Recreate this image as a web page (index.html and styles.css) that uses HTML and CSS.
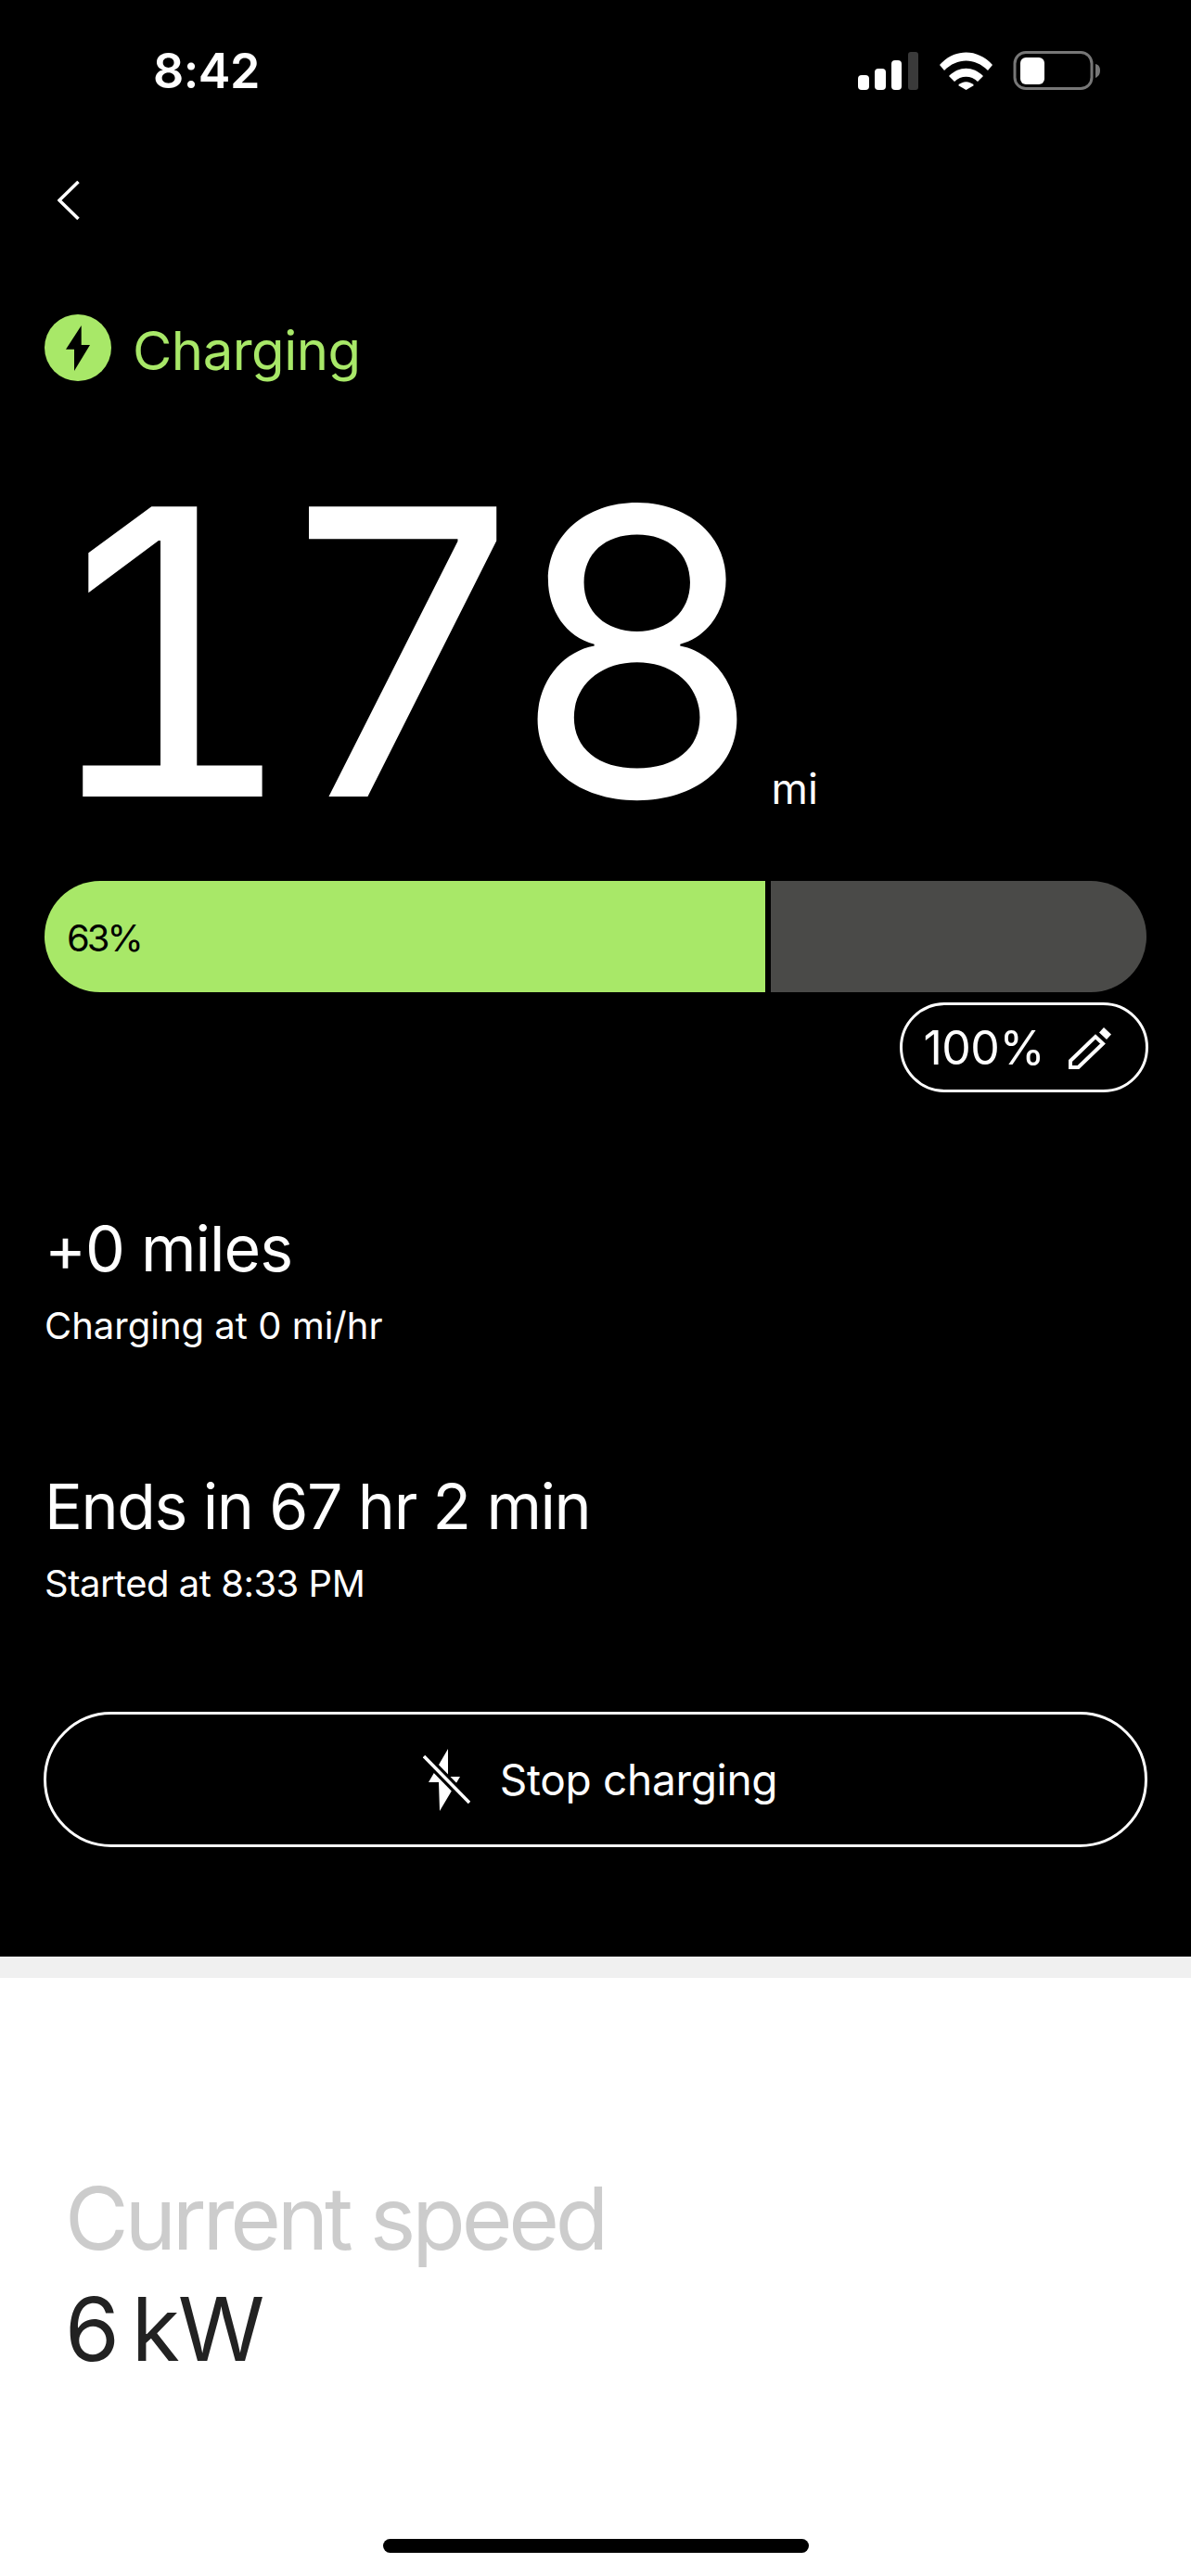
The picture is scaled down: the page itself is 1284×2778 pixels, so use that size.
FILE: index.html
```html
<!DOCTYPE html>
<html lang="en">
<head>
    <meta charset="UTF-8">
    <meta name="viewport" content="width=device-width, initial-scale=1.0">
    <title>Charging</title>
    <link rel="stylesheet" href="styles.css">
</head>
<body>

    <section class="dark">
        <div class="status-bar">
            <span class="time">8:42</span>
            <svg class="status-icons" width="261" height="42" viewBox="0 0 261 42">
                <rect x="0" y="26" width="12" height="16" rx="4" fill="#fff"/>
                <rect x="18" y="19" width="12" height="23" rx="4" fill="#fff"/>
                <rect x="36" y="10" width="11" height="32" rx="4" fill="#fff"/>
                <rect x="54" y="1" width="11" height="41" rx="3" fill="#3a3a3a"/>
                <path d="M88 15 C104 -3 129 -3 145 15 L140 21 C126 7 107 7 93 21 Z" fill="#fff"/>
                <path d="M98 27 C109 16 124 16 135 27 L129 33 C122 26 111 26 104 33 Z" fill="#fff"/>
                <path d="M108 37 C113 32 120 32 125 37 L116.5 42 Z" fill="#fff"/>
                <rect x="169" y="1.5" width="83" height="39" rx="12" fill="none" stroke="#777" stroke-width="3"/>
                <rect x="175" y="7" width="26" height="29" rx="6" fill="#fff"/>
                <path d="M256 14 C260 15 261 18 261 21 C261 24 260 27 256 29 Z" fill="#777"/>
            </svg>
        </div>

        <a class="back" href="#">
            <svg width="24" height="42" viewBox="0 0 24 42">
                <path d="M22.5 1 L2 21 L22.5 41" fill="none" stroke="#fff" stroke-width="3.5"/>
            </svg>
        </a>

        <div class="status-row">
            <svg width="72" height="72" viewBox="0 0 72 72">
                <circle cx="36" cy="36" r="36" fill="#a8e868"/>
                <path d="M39.7 12 L23 37.7 L32 37.7 L32 61 L49 33 L39.7 33 Z" fill="#000"/>
            </svg>
            <span class="status-label">Charging</span>
        </div>

        <div class="range">
            <span class="range-value">178</span>
            <span class="range-unit">mi</span>
        </div>

        <div class="battery-bar">
            <div class="battery-fill">63%</div>
            <div class="battery-rest"></div>
        </div>

        <div class="limit-row">
            <button class="limit-btn" type="button">
                <span>100%</span>
                <svg width="46" height="46" viewBox="0 0 46 46">
                    <path d="M2 37 L29 11 L37 18.5 L10.5 44 L2 44 Z" fill="none" stroke="#fff" stroke-width="4"/>
                    <path d="M33 6.5 L38 1 L46 8.5 L41 14 Z" fill="#fff"/>
                </svg>
            </button>
        </div>

        <div class="stat stat-miles">
            <div class="stat-title">+0 miles</div>
            <div class="stat-sub">Charging at 0 mi/hr</div>
        </div>

        <div class="stat stat-time">
            <div class="stat-title">Ends in 67 hr 2 min</div>
            <div class="stat-sub">Started at 8:33 PM</div>
        </div>

        <button class="stop-btn" type="button">
            <svg width="51" height="67" viewBox="0 0 51 67">
                <path d="M27 0 L6 36 L17 36 L18 67 L40 30 L27 30 Z" fill="#fff"/>
                <path d="M1 8 L50 58" stroke="#000" stroke-width="10"/>
                <path d="M1 8 L50 58" stroke="#fff" stroke-width="3.5"/>
            </svg>
            <span>Stop charging</span>
        </button>
    </section>

    <div class="band"></div>

    <section class="speed">
        <div class="speed-label">Current speed</div>
        <div class="speed-value">6 kW</div>
    </section>

    <div class="home-indicator"></div>

</body>
</html>
```

FILE: styles.css
```css
* { box-sizing: border-box; }
body {
    margin: 0;
    width: 1284px;
    height: 2778px;
    overflow: hidden;
    background: #fff;
    font-family: Inter, "Liberation Sans", sans-serif;
}
.dark {
    height: 2110px;
    padding: 0 48px;
    background: #000;
    color: #fff;
    overflow: hidden;
}
.status-bar {
    display: flex;
    justify-content: space-between;
    align-items: center;
    height: 152px;
    margin: 0 -48px;
    padding: 0 98px 0 165px;
}
.time {
    font-size: 52px;
    font-weight: 600;
    letter-spacing: -0.5px;
}
.back {
    display: block;
    height: 42px;
    margin: 43px 0 0 14px;
}
.back svg { display: block; }
.status-row {
    display: flex;
    align-items: center;
    gap: 23px;
    height: 72px;
    margin-top: 102px;
}
.status-label {
    padding-top: 6px;
    font-size: 58px;
    letter-spacing: -0.5px;
    color: #a8e868;
}
.range {
    display: flex;
    align-items: flex-end;
    height: 492px;
    margin-bottom: 47px;
    padding-top: 92px;
}
.range-value {
    margin-left: -6px;
    font-size: 430px;
    line-height: 400px;
    font-feature-settings: "tnum";
    letter-spacing: -26px;
}
.range-unit {
    margin: 0 0 27px 31px;
    font-size: 45px;
    line-height: 50px;
}
.battery-bar {
    display: flex;
    gap: 6px;
    height: 120px;
}
.battery-fill {
    display: flex;
    align-items: center;
    width: 777px;
    padding: 2px 0 0 24px;
    background: #a8e868;
    border-radius: 60px 0 0 60px;
    color: #000;
    font-size: 40px;
    letter-spacing: -3px;
}
.battery-rest {
    flex: 1;
    background: #4a4a48;
    border-radius: 0 60px 60px 0;
}
.limit-row {
    display: flex;
    justify-content: flex-end;
    margin: 11px -2px 0 0;
}
.limit-btn {
    display: flex;
    align-items: center;
    gap: 26px;
    height: 97px;
    padding: 0 37px 0 22px;
    border: 3px solid #fff;
    border-radius: 49px;
    background: none;
    color: #fff;
    font-family: inherit;
    font-size: 50px;
    letter-spacing: -0.5px;
}
.stat-miles { margin-top: 124px; }
.stat-time { margin-top: 120px; }
.stat-title {
    font-size: 68px;
    line-height: 88px;
    letter-spacing: -1px;
}
.stat-sub {
    margin-top: 10px;
    font-size: 40px;
    line-height: 60px;
}
.stat-time .stat-title { letter-spacing: -1.4px; }
.stat-time .stat-sub { letter-spacing: -0.5px; }
.stop-btn {
    display: flex;
    align-items: center;
    justify-content: center;
    gap: 32px;
    width: calc(100% + 2px);
    height: 146px;
    margin: 108px 0 0 -1px;
    padding-left: 16px;
    border: 3px solid #fff;
    border-radius: 73px;
    background: none;
    color: #fff;
    font-family: inherit;
    font-size: 46px;
    letter-spacing: -0.3px;
}
.band {
    height: 23px;
    background: #f0f0f0;
}
.speed { padding: 204px 70px 0; }
.speed-label {
    font-size: 94px;
    line-height: 110px;
    letter-spacing: -4.2px;
    color: #ccc;
}
.speed-value {
    margin-top: 5px;
    font-size: 95px;
    line-height: 120px;
    letter-spacing: -2px;
    word-spacing: -10px;
    color: #222;
}
.home-indicator {
    width: 459px;
    height: 15px;
    margin: 166px 0 0 413px;
    border-radius: 8px;
    background: #000;
}
```
